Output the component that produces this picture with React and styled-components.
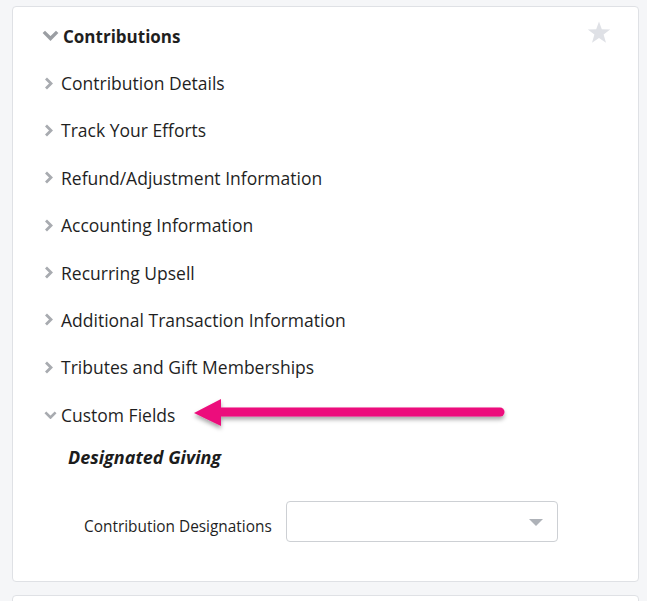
import React from "react";
import styled, { createGlobalStyle } from "styled-components";

const GlobalStyle = createGlobalStyle`
  html, body {
    margin: 0;
    padding: 0;
    background: #f5f6f8;
    font-family: "Open Sans", "Noto Sans", sans-serif;
    color: #1f1f1f;
  }
`;

const Page = styled.div`
  position: relative;
  width: 647px;
  height: 601px;
  overflow: hidden;
  padding: 6px 8px 0 12px;
  box-sizing: border-box;
`;

const Card = styled.section`
  position: relative;
  background: #fff;
  border: 1px solid #dfe1e5;
  border-radius: 4px;
  box-sizing: border-box;
  padding: ${(p) => p.$pad || "17px 0 39px 29px"};
  margin-bottom: 13px;
`;

const Star = styled.svg`
  position: absolute;
  top: 14px;
  right: 27px;
`;

const Header = styled.div`
  display: flex;
  align-items: center;
  gap: 4px;
  height: 24px;
  font-size: 17px;
  font-weight: 700;
  color: #1f1f1f;
`;

const List = styled.ul`
  list-style: none;
  margin: 23px 0 0;
  padding: 0 0 0 2px;
`;

const Row = styled.li`
  display: flex;
  align-items: center;
  gap: ${(p) => (p.$open ? "4px" : "8px")};
  height: 24px;
  margin-bottom: 23.4px;
  font-size: 17.5px;
  color: #1f1f1f;
  &:last-child {
    margin-bottom: 0;
  }
`;

const Section = styled.div`
  padding: 18px 0 0 26px;
`;

const SubTitle = styled.h3`
  margin: 0;
  font-size: 18px;
  font-weight: 700;
  font-style: italic;
  line-height: 24px;
  color: #1c1c1c;
`;

const Field = styled.div`
  display: flex;
  align-items: center;
  gap: 14px;
  margin-top: 32px;
  padding-left: 16px;
`;

const Label = styled.label`
  font-size: 15.4px;
  color: #1f1f1f;
  padding-top: 10px;
`;

const Select = styled.div`
  position: relative;
  width: 272px;
  height: 41px;
  box-sizing: border-box;
  border: 1px solid #cdd0d4;
  border-radius: 4px;
  background: #fff;
`;

const Caret = styled.span`
  position: absolute;
  right: 14px;
  top: 17px;
  width: 0;
  height: 0;
  border-left: 7px solid transparent;
  border-right: 7px solid transparent;
  border-top: 7px solid #aeb2b8;
`;

const Arrow = styled.svg`
  position: absolute;
  left: 190px;
  top: 396px;
  overflow: visible;
`;

const ChevronRight = () => (
  <svg width="9" height="13" viewBox="0 0 9 13">
    <path d="M2 1.5 L7 6.5 L2 11.5" fill="none" stroke="#a8abb0" strokeWidth="2.8" />
  </svg>
);

const ChevronDown = ({ size = 14, color = "#a8abb0" }) => (
  <svg width={size} height={size * 0.65} viewBox="0 0 14 9">
    <path d="M1.5 1.5 L7 7 L12.5 1.5" fill="none" stroke={color} strokeWidth="2.8" />
  </svg>
);

const items = [
  "Contribution Details",
  "Track Your Efforts",
  "Refund/Adjustment Information",
  "Accounting Information",
  "Recurring Upsell",
  "Additional Transaction Information",
  "Tributes and Gift Memberships",
];

export default function App() {
  return (
    <>
      <GlobalStyle />
      <Page>
        <Card>
          <Star width="24" height="23" viewBox="0 0 24 23">
            <path
              d="M12 0.5 L14.8 8.3 L23.2 8.5 L16.6 13.6 L19 21.8 L12 17 L5 21.8 L7.4 13.6 L0.8 8.5 L9.2 8.3 Z"
              fill="#dfe1e6"
            />
          </Star>
          <Header>
            <ChevronDown size={17} color="#9b9ea3" />
            Contributions
          </Header>
          <List>
            {items.map((t) => (
              <Row key={t}>
                <ChevronRight />
                {t}
              </Row>
            ))}
            <Row $open>
              <ChevronDown size={13} />
              Custom Fields
            </Row>
          </List>
          <Section>
            <SubTitle>Designated Giving</SubTitle>
            <Field>
              <Label>Contribution Designations</Label>
              <Select>
                <Caret />
              </Select>
            </Field>
          </Section>
        </Card>
        <Card $pad="20px" />
        <Arrow width="320" height="34" viewBox="0 0 320 34">
          <defs>
            <filter id="sh" x="-10%" y="-50%" width="120%" height="200%">
              <feDropShadow dx="0" dy="3" stdDeviation="2" floodColor="#000" floodOpacity="0.35" />
            </filter>
          </defs>
          <g filter="url(#sh)">
            <line x1="28" y1="16" x2="310" y2="16" stroke="#ec0c7b" strokeWidth="9" strokeLinecap="round" />
            <path d="M4 17 L31 3 L31 30 Z" fill="#ec0c7b" />
          </g>
        </Arrow>
      </Page>
    </>
  );
}
